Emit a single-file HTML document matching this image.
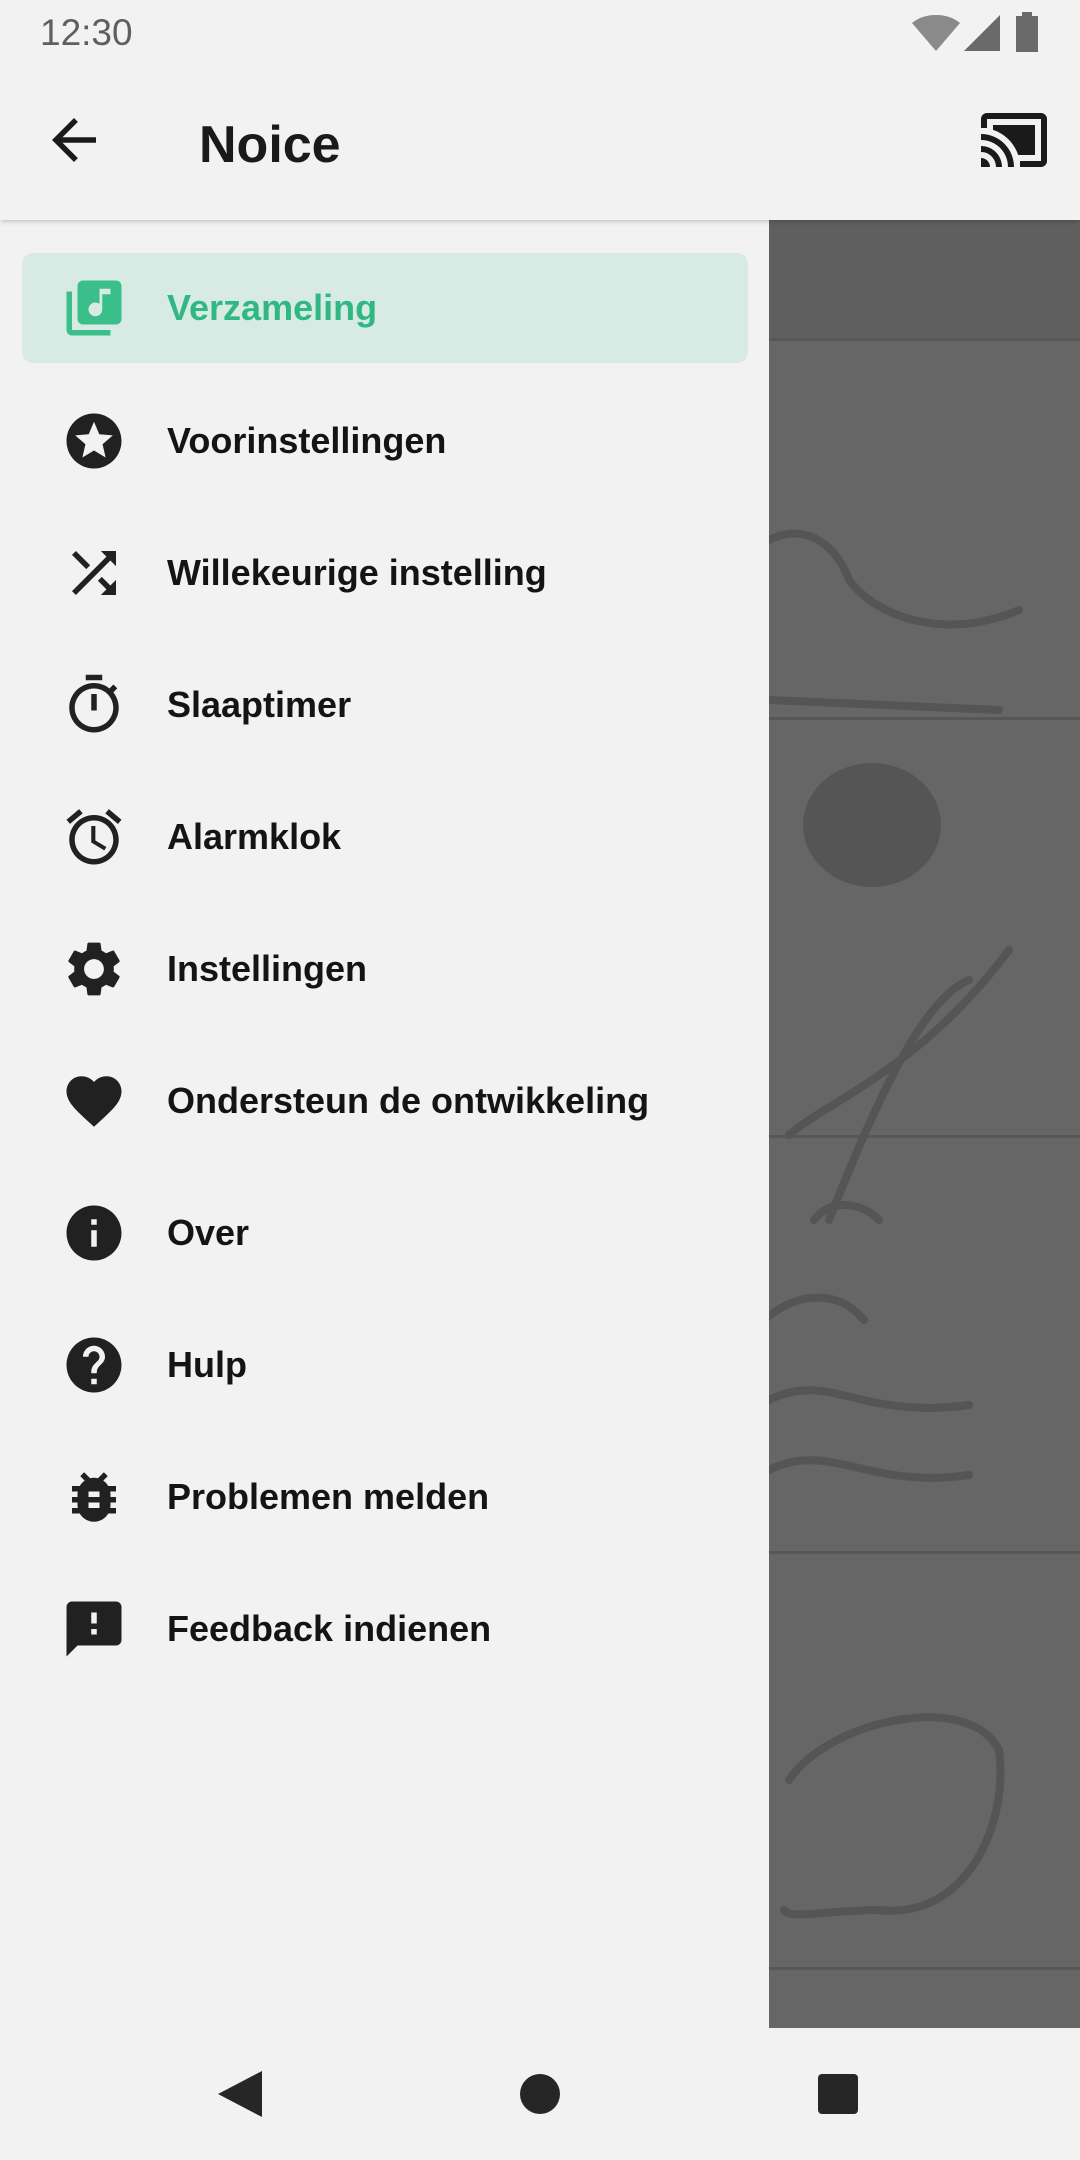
<!DOCTYPE html>
<html><head><meta charset="utf-8"><style>
html,body{margin:0;padding:0}
body{width:1080px;height:2160px;position:relative;overflow:hidden;background:#f2f2f2;font-family:"Liberation Sans",Roboto,sans-serif}
.abs{position:absolute}
.item{position:absolute;left:22px;width:726px;height:110px}
.item svg{position:absolute;left:39px;top:22px;width:66px;height:66px;fill:#212121}
.item span{position:absolute;left:145px;top:0;line-height:110px;font-size:36px;font-weight:bold;color:#141414;white-space:nowrap}
</style></head><body>
<!-- overlay -->
<div class="abs" style="left:769px;top:220px;width:311px;height:1808px;background:#666"></div>
<div class="abs" style="left:769px;top:220px;width:311px;height:120px;background:#5f5f5f"></div>
<div class="abs" style="left:769px;top:338px;width:311px;height:3px;background:#575757"></div>
<div class="abs" style="left:769px;top:717px;width:311px;height:3px;background:#575757"></div>
<div class="abs" style="left:769px;top:1135px;width:311px;height:3px;background:#575757"></div>
<div class="abs" style="left:769px;top:1551px;width:311px;height:3px;background:#575757"></div>
<div class="abs" style="left:769px;top:1967px;width:311px;height:3px;background:#575757"></div>
<svg class="abs" style="left:769px;top:220px" width="311" height="1808" viewBox="0 0 311 1808" fill="none" stroke="#555" stroke-width="8" stroke-linecap="round">
<path d="M0 320 C40 300 70 330 80 360 C110 400 180 420 250 390 M0 480 L230 490" />
<ellipse cx="103" cy="605" rx="65" ry="58" fill="#555" />
<path d="M20 915 C60 880 150 850 240 730 M60 1000 C100 900 150 780 200 760" />
<path d="M45 1000 C60 980 90 980 110 1000 M-5 1100 C30 1070 70 1070 95 1100 M0 1180 C60 1150 90 1200 200 1185 M0 1250 C60 1220 100 1270 200 1255" />
<path d="M20 1560 C60 1500 200 1470 230 1530 C240 1600 200 1700 110 1690 C60 1690 20 1700 15 1690" />
</svg>
<!-- toolbar -->
<div class="abs" style="left:0;top:0;width:1080px;height:220px;background:#f2f2f2;box-shadow:0 3px 4px -1px rgba(0,0,0,.18)"></div>
<!-- status bar -->
<div class="abs" style="left:40px;top:10px;font-size:37px;color:#5f5f5f;line-height:46px">12:30</div>
<svg class="abs" style="left:912px;top:15px" width="48" height="36" viewBox="0 0 24 18"><path d="M12 18L0 4C3 1.5 7 0 12 0s9 1.5 12 4z" fill="#8a8a8a"/></svg>
<svg class="abs" style="left:964px;top:15px" width="36" height="36" viewBox="0 0 18 18"><path d="M0 18L18 0v18z" fill="#6a6a6a"/></svg>
<svg class="abs" style="left:1016px;top:12px" width="22" height="40" viewBox="0 0 11 20"><path d="M3 0h5v2h3v18H0V2h3z" fill="#6a6a6a"/></svg>
<svg class="abs" style="left:41px;top:107px;width:66px;height:66px" viewBox="0 0 24 24"><path fill="#1a1a1a" d="M20 11H7.83l5.59-5.59L12 4l-8 8 8 8 1.41-1.41L7.83 13H20v-2z"/></svg>
<div class="abs" style="left:199px;top:110px;font-size:52px;font-weight:bold;color:#1a1a1a;line-height:70px">Noice</div>
<svg class="abs" style="left:978px;top:104px;width:72px;height:72px" viewBox="0 0 24 24"><path fill="#1a1a1a" d="M1 18v3h3c0-1.66-1.34-3-3-3zm0-4v2c2.76 0 5 2.24 5 5h2c0-3.87-3.13-7-7-7zm18-7H5v1.63c3.96 1.28 7.09 4.41 8.37 8.37H19V7zM1 10v2c4.97 0 9 4.03 9 9h2c0-6.08-4.93-11-11-11zm20-7H3c-1.1 0-2 .9-2 2v3h2V5h18v14h-7v2h7c1.1 0 2-.9 2-2V5c0-1.1-.9-2-2-2z"/></svg>
<!-- drawer items -->
<div class="item" style="top:253px;background:#d7ebe4;border-radius:11px">
<svg viewBox="0 0 24 24" style="fill:#3bbf8a"><path d="M20 2H8c-1.1 0-2 .9-2 2v12c0 1.1.9 2 2 2h12c1.1 0 2-.9 2-2V4c0-1.1-.9-2-2-2zm-2 5h-3v5.5c0 1.38-1.12 2.5-2.5 2.5S10 13.88 10 12.5s1.12-2.5 2.5-2.5c.57 0 1.08.19 1.5.51V5h4v2zM4 6H2v14c0 1.1.9 2 2 2h14v-2H4V6z"/></svg>
<span style="color:#2fb883">Verzameling</span></div>
<div class="item" style="top:386px"><svg viewBox="0 0 24 24"><path d="M11.99 2C6.47 2 2 6.48 2 12s4.47 10 9.99 10C17.52 22 22 17.52 22 12S17.52 2 11.99 2zm4.24 16L12 15.45 7.77 18l1.12-4.81-3.73-3.23 4.92-.42L12 5l1.92 4.53 4.92.42-3.73 3.23L16.23 18z"/></svg><span>Voorinstellingen</span></div>
<div class="item" style="top:518px"><svg viewBox="0 0 24 24"><path d="M10.59 9.17L5.41 4 4 5.41l5.17 5.17 1.42-1.41zM14.5 4l2.04 2.04L4 18.59 5.41 20 17.96 7.46 20 9.5V4h-5.5zm.33 9.41l-1.41 1.410 3.13 3.13L14.5 20H20v-5.5l-2.04 2.04-3.13-3.13z"/></svg><span>Willekeurige instelling</span></div>
<div class="item" style="top:650px"><svg viewBox="0 0 24 24"><path d="M15 1H9v2h6V1zm-4 13h2V8h-2v6zm8.03-6.61l1.42-1.42c-.43-.51-.9-.99-1.41-1.41l-1.42 1.42C16.07 4.74 14.12 4 12 4c-4.97 0-9 4.03-9 9s4.02 9 9 9 9-4.03 9-9c0-2.12-.74-4.07-1.97-5.61zM12 20c-3.87 0-7-3.13-7-7s3.13-7 7-7 7 3.13 7 7-3.13 7-7 7z"/></svg><span>Slaaptimer</span></div>
<div class="item" style="top:782px"><svg viewBox="0 0 24 24"><path d="M22 5.72l-4.6-3.86-1.29 1.53 4.6 3.86L22 5.72zM7.88 3.39L6.6 1.86 2 5.71l1.29 1.53 4.59-3.85zM12.5 8H11v6l4.75 2.85.75-1.23-4-2.37V8zM12 4c-4.97 0-9 4.03-9 9s4.02 9 9 9c4.97 0 9-4.03 9-9s-4.03-9-9-9zm0 16c-3.87 0-7-3.13-7-7s3.13-7 7-7 7 3.13 7 7-3.13 7-7 7z"/></svg><span>Alarmklok</span></div>
<div class="item" style="top:914px"><svg viewBox="0 0 24 24"><path d="M19.14 12.94c.04-.3.06-.61.06-.94 0-.32-.02-.64-.07-.94l2.03-1.58c.18-.14.23-.41.12-.61l-1.92-3.32c-.12-.22-.37-.29-.59-.22l-2.39.96c-.5-.38-1.03-.7-1.62-.94l-.36-2.54c-.04-.24-.24-.41-.48-.41h-3.84c-.24 0-.43.17-.47.41l-.36 2.54c-.59.24-1.13.57-1.62.94l-2.39-.96c-.22-.08-.47 0-.59.22L2.74 8.87c-.12.21-.08.47.12.61l2.03 1.58c-.05.3-.09.63-.09.94s.02.64.07.94l-2.03 1.58c-.18.14-.23.41-.12.61l1.92 3.32c.12.22.37.29.59.22l2.39-.96c.5.38 1.03.7 1.62.94l.36 2.54c.05.24.24.41.48.41h3.84c.24 0 .44-.17.47-.41l.36-2.54c.59-.24 1.13-.56 1.62-.94l2.39.96c.22.08.47 0 .59-.22l1.92-3.32c.12-.22.07-.47-.12-.61l-2.01-1.58zM12 15.6c-1.98 0-3.6-1.62-3.6-3.6s1.62-3.6 3.6-3.6 3.6 1.62 3.6 3.6-1.62 3.6-3.6 3.6z"/></svg><span>Instellingen</span></div>
<div class="item" style="top:1046px"><svg viewBox="0 0 24 24"><path d="M12 21.35l-1.45-1.32C5.4 15.36 2 12.28 2 8.5 2 5.42 4.42 3 7.5 3c1.74 0 3.41.81 4.5 2.09C13.09 3.81 14.76 3 16.5 3 19.58 3 22 5.42 22 8.5c0 3.78-3.4 6.86-8.55 11.54L12 21.35z"/></svg><span>Ondersteun de ontwikkeling</span></div>
<div class="item" style="top:1178px"><svg viewBox="0 0 24 24"><path d="M12 2C6.48 2 2 6.48 2 12s4.48 10 10 10 10-4.48 10-10S17.52 2 12 2zm1 15h-2v-6h2v6zm0-8h-2V7h2v2z"/></svg><span>Over</span></div>
<div class="item" style="top:1310px"><svg viewBox="0 0 24 24"><path d="M12 2C6.48 2 2 6.48 2 12s4.48 10 10 10 10-4.48 10-10S17.52 2 12 2zm1 17h-2v-2h2v2zm2.07-7.75l-.9.92C13.45 12.9 13 13.5 13 15h-2v-.5c0-1.1.45-2.1 1.17-2.83l1.24-1.26c.37-.36.59-.86.59-1.41 0-1.1-.9-2-2-2s-2 .9-2 2H8c0-2.21 1.79-4 4-4s4 1.79 4 4c0 .88-.36 1.68-.93 2.25z"/></svg><span>Hulp</span></div>
<div class="item" style="top:1442px"><svg viewBox="0 0 24 24"><path d="M20 8h-2.81c-.45-.78-1.07-1.45-1.82-1.96L17 4.41 15.59 3l-2.17 2.17C12.96 5.06 12.49 5 12 5c-.49 0-.96.06-1.41.17L8.41 3 7 4.41l1.62 1.63C7.88 6.55 7.26 7.22 6.81 8H4v2h2.09c-.05.33-.09.66-.09 1v1H4v2h2v1c0 .34.04.67.09 1H4v2h2.81c1.04 1.79 2.97 3 5.19 3s4.15-1.21 5.19-3H20v-2h-2.09c.05-.33.09-.66.09-1v-1h2v-2h-2v-1c0-.34-.04-.67-.09-1H20V8zm-6 8h-4v-2h4v2zm0-4h-4v-2h4v2z"/></svg><span>Problemen melden</span></div>
<div class="item" style="top:1574px"><svg viewBox="0 0 24 24"><path d="M20 2H4c-1.1 0-1.99.9-1.99 2L2 22l4-4h14c1.1 0 2-.9 2-2V4c0-1.1-.9-2-2-2zm-7 12h-2v-2h2v2zm0-4h-2V6h2v4z"/></svg><span>Feedback indienen</span></div>
<!-- nav bar -->
<div class="abs" style="left:0;top:2028px;width:1080px;height:132px;background:#f2f2f2"></div>
<svg class="abs" style="left:218px;top:2071px" width="44" height="46" viewBox="0 0 22 23"><path d="M22 0v23L0 11.5z" fill="#262626"/></svg>
<div class="abs" style="left:520px;top:2074px;width:40px;height:40px;border-radius:50%;background:#262626"></div>
<div class="abs" style="left:818px;top:2074px;width:40px;height:40px;border-radius:4px;background:#262626"></div>
</body></html>
